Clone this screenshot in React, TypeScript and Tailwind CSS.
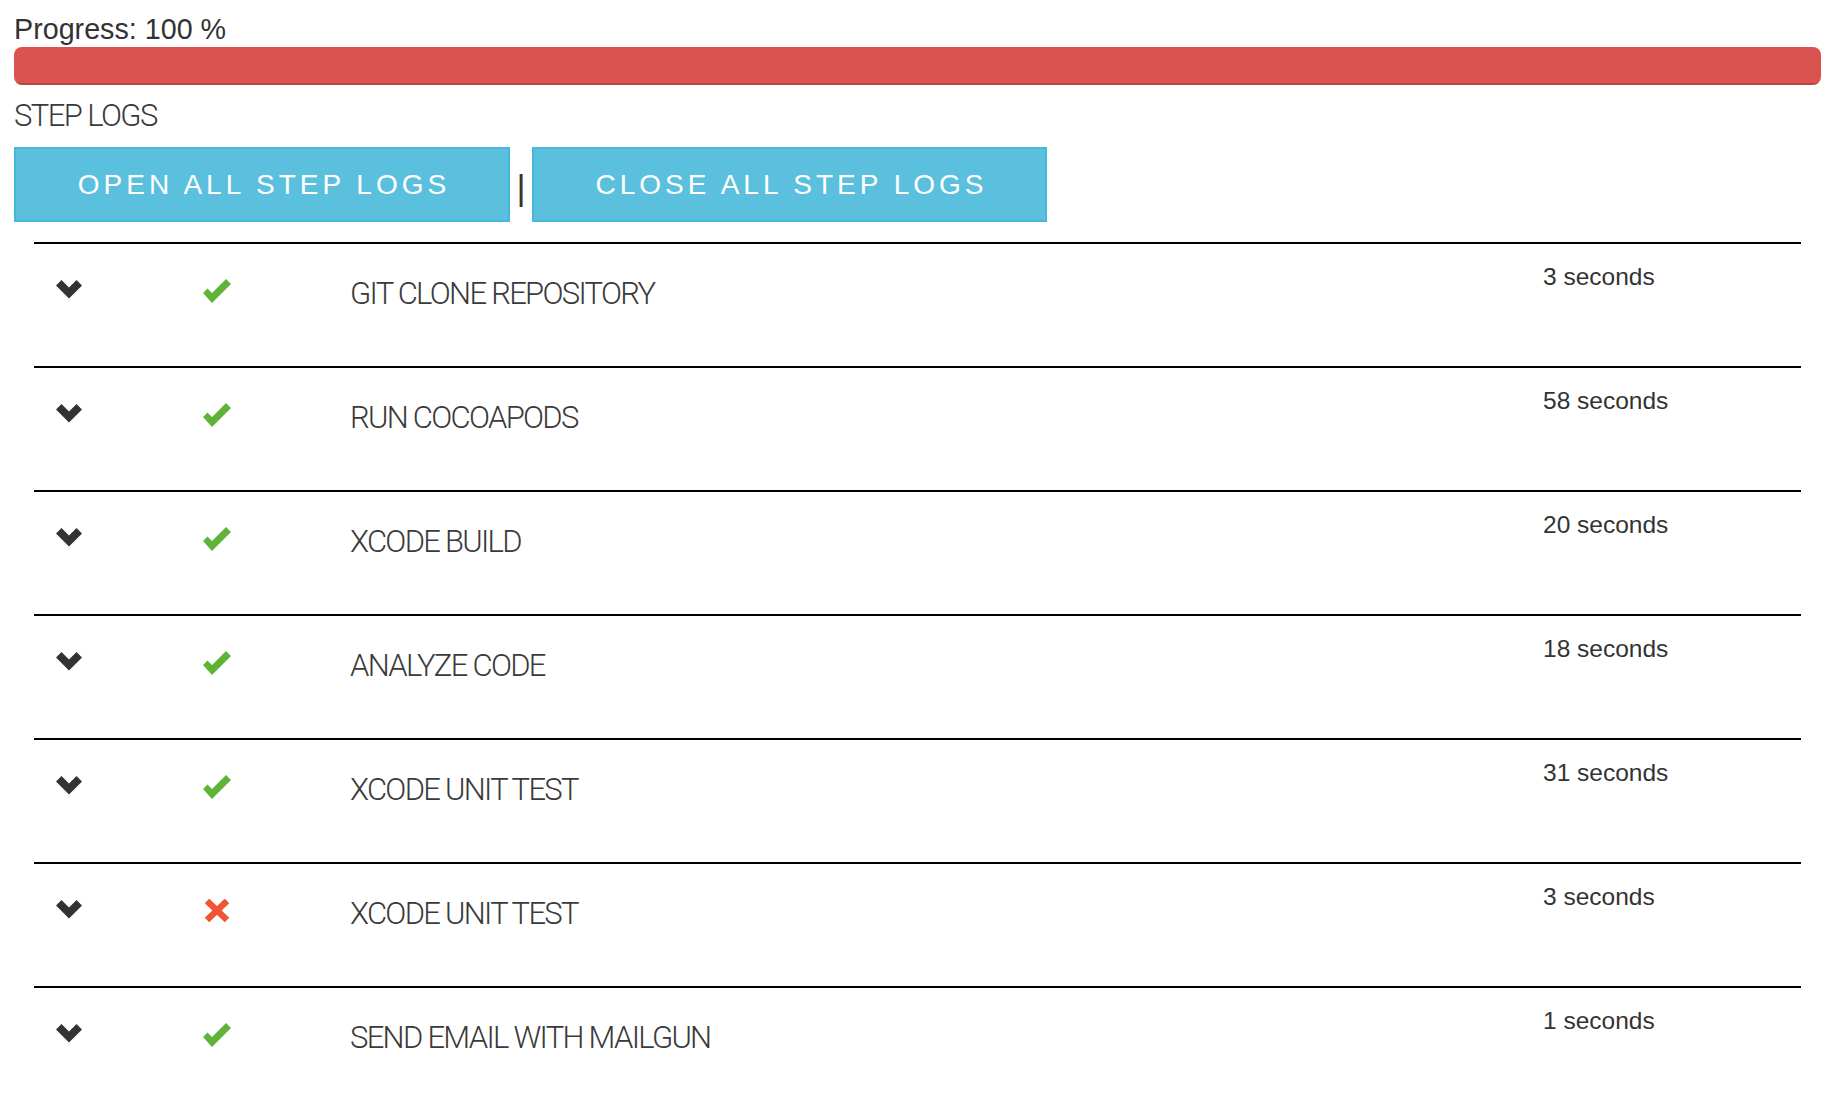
import React from 'react';

type Step = { name: string; time: string; ok: boolean };

const steps: Step[] = [
  { name: 'GIT CLONE REPOSITORY', time: '3 seconds', ok: true },
  { name: 'RUN COCOAPODS', time: '58 seconds', ok: true },
  { name: 'XCODE BUILD', time: '20 seconds', ok: true },
  { name: 'ANALYZE CODE', time: '18 seconds', ok: true },
  { name: 'XCODE UNIT TEST', time: '31 seconds', ok: true },
  { name: 'XCODE UNIT TEST', time: '3 seconds', ok: false },
  { name: 'SEND EMAIL WITH MAILGUN', time: '1 seconds', ok: true },
];

function Chevron() {
  return (
    <svg width="26" height="19" viewBox="0 0 26 19" className="block">
      <polygon points="0,5.5 5.5,0 13,7.5 20.5,0 26,5.5 13,18.5" fill="#333" />
    </svg>
  );
}

function StatusIcon({ ok }: { ok: boolean }) {
  if (ok) {
    return (
      <svg width="30" height="24" viewBox="0 0 30 24" className="block">
        <polygon points="1,14 5.5,9.5 10,14 24,0 29,5 10,24" fill="#5fb336" />
      </svg>
    );
  }
  return (
    <svg width="30" height="24" viewBox="0 0 30 24" className="block">
      <path d="M5 2 L25 21 M25 2 L5 21" stroke="#ee5530" strokeWidth="6.5" />
    </svg>
  );
}

function StepRow({ step }: { step: Step }) {
  return (
    <div className="flex h-[124px] items-start border-t-2 border-black">
      <div className="ml-[22px] mt-[36px] w-[26px]">
        <Chevron />
      </div>
      <div className="ml-[120px] mt-[35px] w-[30px]">
        <StatusIcon ok={step.ok} />
      </div>
      <div className="ml-[118px] mt-[32px] flex-1 font-['Roboto',sans-serif] text-[31px] font-light leading-[36px] tracking-[-1.7px] text-[#3a3a3a]">
        {step.name}
      </div>
      <div className="mt-[16px] w-[258px] text-[24.5px] leading-[34px] text-[#333]">{step.time}</div>
    </div>
  );
}

export default function App() {
  return (
    <div className="min-h-screen bg-white pl-[14px] pr-[13px] font-['Liberation_Sans',Arial,sans-serif] text-[#333]">
      <div className="pt-[11px] text-[28.7px] leading-[36px]">Progress: 100 %</div>
      <div className="h-[38px] overflow-hidden rounded-[8px] bg-[#f5f5f5]">
        <div className="h-full w-full bg-[#d9534f] shadow-[inset_0_-2px_0_rgba(0,0,0,0.15)]" />
      </div>

      <div className="mt-[13px] font-['Roboto',sans-serif] text-[31px] font-light leading-[36px] tracking-[-1.6px] text-[#3a3a3a]">
        STEP LOGS
      </div>

      <div className="mt-[13px] flex items-start">
        <button className="flex h-[75px] w-[496px] items-center justify-center border-2 border-[#46b8da] bg-[#5bc0de] pl-[4px] text-[28px] tracking-[4px] text-white">
          OPEN ALL STEP LOGS
        </button>
        <span className="mt-[21px] w-[22px] text-center text-[35px] leading-[40px] text-[#333]">|</span>
        <button className="flex h-[75px] w-[515px] items-center justify-center border-2 border-[#46b8da] bg-[#5bc0de] pl-[4px] text-[28px] tracking-[4px] text-white">
          CLOSE ALL STEP LOGS
        </button>
      </div>

      <div className="mx-[20px] mt-[20px]">
        {steps.map((step, idx) => (
          <StepRow key={idx} step={step} />
        ))}
      </div>
    </div>
  );
}
